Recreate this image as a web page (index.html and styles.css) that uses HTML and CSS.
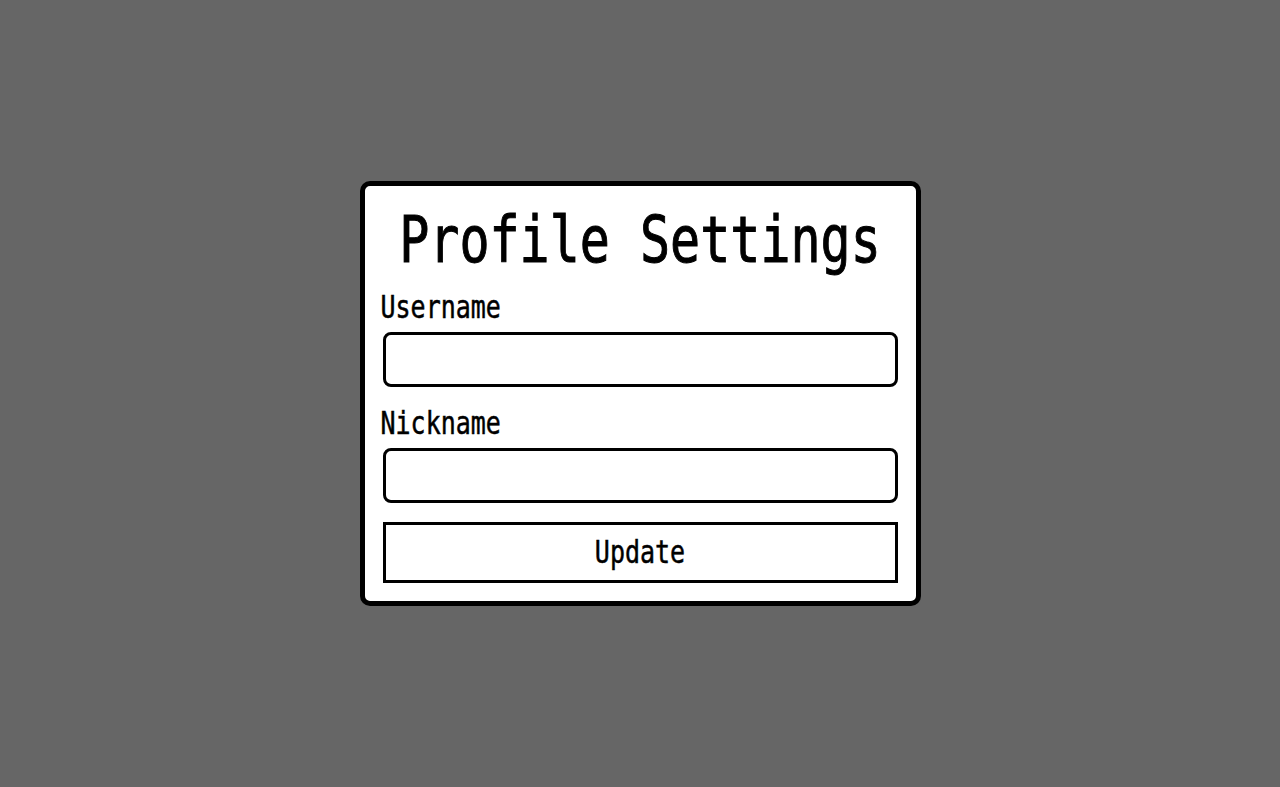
FILE: index.html
```html
<!DOCTYPE html>
<html lang="en">
<head>
<meta charset="utf-8">
<title>Profile Settings</title>
<link rel="stylesheet" href="styles.css">
</head>
<body>
  <form class="card">
    <h1 class="title"><span class="tall">Profile Settings</span></h1>
    <label class="label" for="username"><span class="tall">Username</span></label>
    <input class="field" id="username" type="text">
    <label class="label label-next" for="nickname"><span class="tall">Nickname</span></label>
    <input class="field" id="nickname" type="text">
    <button class="btn" type="button"><span class="tall">Update</span></button>
  </form>
</body>
</html>
```

FILE: styles.css
```css
html, body {
  margin: 0;
  padding: 0;
}
body {
  background: #666666;
  height: 100vh;
  display: flex;
  align-items: center;
  justify-content: center;
  font-family: "DejaVu Sans Mono", "Liberation Mono", monospace;
  color: #000;
}
.card {
  width: 561px;
  box-sizing: border-box;
  background: #ffffff;
  border: 5px solid #000;
  border-radius: 10px;
  padding: 18px;
  display: flex;
  flex-direction: column;
}
.tall {
  display: inline-block;
  transform: scaleY(1.28);
}
.title {
  margin: 0;
  height: 83px;
  box-sizing: border-box;
  padding-bottom: 11px;
  display: flex;
  align-items: center;
  justify-content: center;
  font-size: 50px;
  font-weight: normal;
  line-height: 1;
  -webkit-text-stroke: 0.8px #000;
}
.label {
  height: 40px;
  display: flex;
  align-items: center;
  font-size: 25px;
  line-height: 1;
  margin: 0 0 5px -2px;
  -webkit-text-stroke: 0.4px #000;
}
.label-next {
  margin-top: 16px;
}
.field {
  display: block;
  width: 100%;
  box-sizing: border-box;
  height: 55px;
  border: 3px solid #000;
  border-radius: 8px;
  background: #fff;
  padding: 0 10px;
  font-family: inherit;
  font-size: 20px;
  outline: none;
}
.btn {
  margin-top: 19px;
  width: 100%;
  height: 61px;
  box-sizing: border-box;
  border: 3px solid #000;
  border-radius: 0;
  background: #fff;
  color: #000;
  font-family: inherit;
  font-size: 25px;
  line-height: 1;
  padding: 0;
  cursor: pointer;
  -webkit-text-stroke: 0.4px #000;
}
```
